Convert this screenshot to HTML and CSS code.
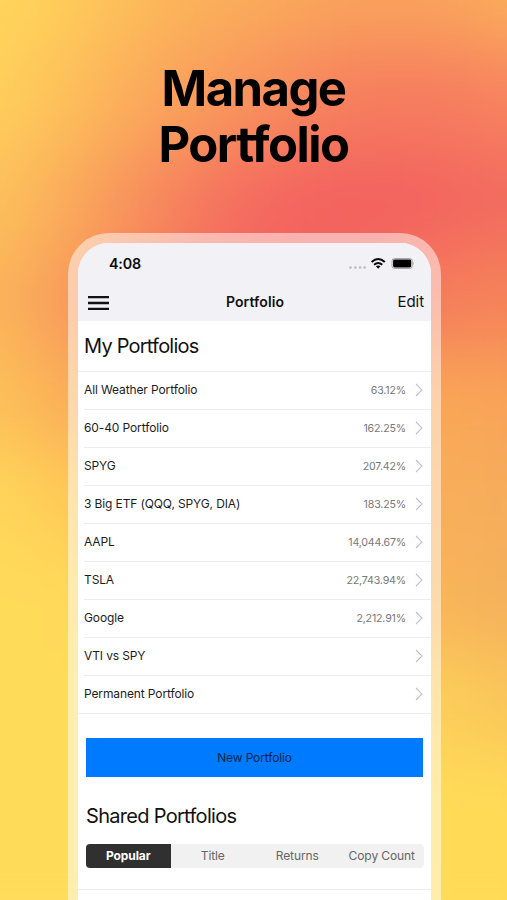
FILE: index.html
```html
<!DOCTYPE html>
<html lang="en">
<head>
<meta charset="utf-8">
<title>Manage Portfolio</title>
<link rel="stylesheet" href="styles.css">
</head>
<body>
<main class="poster">
  <div class="backdrop"><div class="mesh">
    <i class="band b0"></i><i class="band b1"></i><i class="band b2"></i><i class="band b3"></i><i class="band b4"></i><i class="band b5"></i><i class="band b6"></i><i class="band b7"></i><i class="band b8"></i><i class="band b9"></i><i class="band b10"></i>
  </div></div>
  <h1 class="headline">Manage<br>Portfolio</h1>
  <div class="phone">
    <div class="screen">
      <header class="top">
        <div class="status">
          <span class="time">4:08</span>
          <svg class="signals" width="68" height="14" viewBox="0 0 68 14">
            <g fill="#bdbdc4"><circle cx="2.5" cy="10.6" r="1.3"/><circle cx="7.4" cy="10.6" r="1.3"/><circle cx="12.1" cy="10.6" r="1.3"/><circle cx="16.7" cy="10.6" r="1.3"/></g>
            <g fill="none" stroke="#0a0a0c" stroke-width="2"><path d="M23.6 5Q30.2 -.9 36.8 5"/><path d="M26.1 7.8Q30.2 4.2 34.3 7.8"/></g>
            <path d="M27.9 9.3Q30.2 7.8 32.5 9.3L30.2 11.8Z" fill="#0a0a0c"/>
            <rect x="44" y="1.5" width="20.3" height="10" rx="2.6" fill="none" stroke="#a5a5ab"/>
            <rect x="45.1" y="2.6" width="18.1" height="7.9" rx="1.4"/>
            <path d="M65.3 4.8q1.6 1.7 0 3.4z" fill="#a5a5ab"/>
          </svg>
        </div>
        <nav class="nav">
          <svg class="menu" width="21" height="16" viewBox="0 0 21 16"><path d="M0 2.2H21M0 8H21M0 13.8H21" stroke="#111" stroke-width="2.3"/></svg>
          <span class="nav-title">Portfolio</span>
          <span class="edit">Edit</span>
        </nav>
      </header>
      <h2 class="section">My Portfolios</h2>
      <ul class="list">
        <li><span class="name">All Weather Portfolio</span><span class="value">63.12%</span><svg class="chev" viewBox="0 0 8 14"><path d="M1 1l6 6-6 6"/></svg></li>
        <li><span class="name">60-40 Portfolio</span><span class="value">162.25%</span><svg class="chev" viewBox="0 0 8 14"><path d="M1 1l6 6-6 6"/></svg></li>
        <li><span class="name">SPYG</span><span class="value">207.42%</span><svg class="chev" viewBox="0 0 8 14"><path d="M1 1l6 6-6 6"/></svg></li>
        <li><span class="name">3 Big ETF (QQQ, SPYG, DIA)</span><span class="value">183.25%</span><svg class="chev" viewBox="0 0 8 14"><path d="M1 1l6 6-6 6"/></svg></li>
        <li><span class="name">AAPL</span><span class="value">14,044.67%</span><svg class="chev" viewBox="0 0 8 14"><path d="M1 1l6 6-6 6"/></svg></li>
        <li><span class="name">TSLA</span><span class="value">22,743.94%</span><svg class="chev" viewBox="0 0 8 14"><path d="M1 1l6 6-6 6"/></svg></li>
        <li><span class="name">Google</span><span class="value">2,212.91%</span><svg class="chev" viewBox="0 0 8 14"><path d="M1 1l6 6-6 6"/></svg></li>
        <li><span class="name">VTI vs SPY</span><svg class="chev" viewBox="0 0 8 14"><path d="M1 1l6 6-6 6"/></svg></li>
        <li><span class="name">Permanent Portfolio</span><svg class="chev" viewBox="0 0 8 14"><path d="M1 1l6 6-6 6"/></svg></li>
      </ul>
      <button class="new">New Portfolio</button>
      <h2 class="section shared">Shared Portfolios</h2>
      <div class="tabs"><span class="tab active">Popular</span><span class="tab">Title</span><span class="tab">Returns</span><span class="tab">Copy Count</span></div>
      <div class="rule"></div>
    </div>
  </div>
</main>
</body>
</html>
```

FILE: styles.css
```css
* { box-sizing: border-box; }
body { margin: 0; width: 507px; height: 900px; overflow: hidden; font-family: Inter, "Liberation Sans", sans-serif; color: #111; background: #ffdc5c; }
/* Soft colour mesh: horizontal gradients blurred into each other. */
.backdrop { position: absolute; z-index: -1; inset: 0; overflow: hidden; contain: paint; }
.mesh { width: 707px; height: 1100px; margin: -150px 0 0 -100px; display: grid; grid-template-rows: repeat(11, 100px); filter: blur(34px); }
.band { background: linear-gradient(90deg, var(--a) 100px, var(--b) 170px, var(--c) 250px, var(--d) 350px, var(--e) 450px, var(--f) 545px, var(--g) 607px); }
.b0 { --a:#ffd95c; --b:#ffcc5b; --c:#fdbd5a; --d:#fbb45a; --e:#fab15b; --f:#faaf5b; --g:#faaf5b; }
.b1 { --a:#ffd65b; --b:#ffcb5a; --c:#fcb75a; --d:#faaa5b; --e:#f9a05c; --f:#f9a15c; --g:#faac5b; }
.b2 { --a:#ffd05b; --b:#fdbe5a; --c:#fba65c; --d:#f8915d; --e:#f67d5e; --f:#f67c5f; --g:#f7845f; }
.b3 { --a:#fdc25b; --b:#faaa5a; --c:#f78b5d; --d:#f4695f; --e:#f3605f; --f:#f3645f; --g:#f26c5f; }
.b4 { --a:#fbb65a; --b:#f8985b; --c:#f5795d; --d:#f3605f; --e:#f3675f; --f:#f6805b; --g:#f58359; }
.b5 { --a:#fcc359; --b:#fbab57; --c:#fba858; --d:#f99a58; --e:#f9a258; --f:#faa856; --g:#f8a257; }
.b6 { --a:#ffd75a; --b:#ffc956; --c:#fdbb58; --d:#fbad58; --e:#fba958; --f:#f9b05a; --g:#f5ac5c; }
.b7 { --a:#ffdb5a; --b:#ffdb5a; --c:#ffcf5a; --d:#fdbd5a; --e:#fcb55a; --f:#f9b558; --g:#f4b05c; }
.b8 { --a:#ffdb5a; --b:#ffdb5a; --c:#ffdb5a; --d:#ffcf5a; --e:#ffca5a; --f:#fdcf59; --g:#f9c45b; }
.b9, .b10 { --a:#ffdb5a; --b:#ffdb5a; --c:#ffdb5a; --d:#ffdb5a; --e:#ffdb5a; --f:#ffdb56; --g:#ffd957; }
.poster { position: relative; z-index: 0; height: 900px; padding-top: 61px; overflow: hidden; }
.headline { margin: 0; height: 172px; font-size: 49px; line-height: 56px; font-weight: 700; text-align: center; color: #000; letter-spacing: -1.55px; }
.phone { width: 373px; height: 667px; margin-left: 68px; padding: 10px 10px 0; border-radius: 41px 41px 0 0; background: rgba(255,255,255,.5); }
.screen { height: 657px; border-radius: 31px 31px 0 0; overflow: hidden; background: #fff; }
.top { height: 78px; background: #f2f1f6; }
.status { height: 40px; padding: 2px 15px 0 31px; display: flex; justify-content: space-between; align-items: center; }
.time { font-size: 14.3px; font-weight: 600; line-height: 18px; margin-top: -1px; color: #0c0c0e; letter-spacing: -.15px; }
.nav { height: 38px; padding: 0 7px 0 10px; display: grid; grid-template-columns: 1fr auto 1fr; align-items: center; }
.menu { margin-top: 1px; }
.nav-title { font-size: 14px; font-weight: 600; margin: -1px 1px 0 -1px; letter-spacing: .1px; }
.edit { font-size: 15px; text-align: right; margin-top: -1px; letter-spacing: -.05px; }
.section { margin: 0; height: 50px; padding-left: 6px; font-size: 20px; font-weight: 400; line-height: 51px; letter-spacing: -.78px; }
.list { margin: 0; padding: 0; list-style: none; border-top: 1px solid #ededef; }
.list li { height: 38px; margin-left: 6px; padding: 0 8px 2px 0; display: flex; align-items: center; border-bottom: 1px solid #ededef; font-size: 12px; letter-spacing: -.12px; }
.list li:last-child { margin-left: 0; padding-left: 6px; }
.name { color: #1c1c1e; }
.value { margin: 2px 9px 0 auto; font-size: 10.6px; letter-spacing: -.16px; color: #77777b; }
.chev { width: 8px; height: 14px; fill: none; stroke: #c2c2c6; stroke-width: 1.1; }
.name + .chev { margin-left: auto; }
.new { display: block; margin: 24px 0 0 8px; width: 337px; height: 39px; padding: 0; border: 0; background: #007aff; color: #08254c; font: 12px/39px Inter, sans-serif; letter-spacing: -.14px; }
.shared { margin-top: 14px; padding-left: 8px; height: 53px; letter-spacing: -.7px; }
.tabs { display: flex; width: 338px; height: 24px; margin-left: 8px; border-radius: 4px; overflow: hidden; background: #f1f1f1; }
.tab { flex: 1; text-align: center; font-size: 12px; line-height: 24px; color: #666; letter-spacing: -.1px; }
.active { background: #303030; color: #fff; font-weight: 700; }
.rule { margin-top: 21px; height: 1px; background: #ededef; }
```
